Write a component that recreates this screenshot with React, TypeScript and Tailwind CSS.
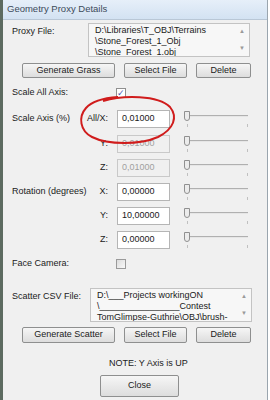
import React from "react";

const font = { fontFamily: "'Liberation Sans', Arial, sans-serif" };

function Btn({ label, className }: { label: string; className: string }) {
  return (
    <div
      className={`flex items-center justify-center rounded-[2px] border border-[#8e8f8f] bg-gradient-to-b from-[#f6f6f6] to-[#dddddd] text-[#1a1a1a] ${className}`}
    >
      {label}
    </div>
  );
}

function Slider() {
  return (
    <div className="relative ml-[14px] h-[18px] w-[66px]">
      <div className="absolute left-[3px] right-[2px] top-[5px] h-[2px] border-t border-[#b0b0b0] bg-[#e6e6e6]" />
      <div className="absolute left-0 top-[1px] h-[10px] w-[6px] rounded-b-[3px] border border-[#909090] bg-[#ececec]" />
      <div className="absolute left-[3px] top-[14px] h-[3px] w-px bg-[#c0c0c0]" />
      <div className="absolute right-[2px] top-[14px] h-[3px] w-px bg-[#c0c0c0]" />
    </div>
  );
}

function AxisRow({
  label,
  axis,
  value,
  disabled,
  mt,
}: {
  label?: string;
  axis: string;
  value: string;
  disabled?: boolean;
  mt: string;
}) {
  return (
    <div className={`flex h-[18px] items-center ${mt}`}>
      <div className="w-[70px] shrink-0 whitespace-nowrap">{label}</div>
      <div className="w-[26px] shrink-0 text-right">{axis}</div>
      <div
        className={`ml-[9px] flex h-[18px] w-[53px] items-center border px-[4px] ${
          disabled
            ? "border-[#c9c9c9] bg-[#f0f0f0] text-[#a0a0a0]"
            : "border-[#b5b5b5] bg-white text-[#1a1a1a]"
        }`}
      >
        {value}
      </div>
      <Slider />
    </div>
  );
}

function FileBox({ lines }: { lines: string[] }) {
  return (
    <div className="flex h-[34px] w-[162px] border border-[#c3c3c3] bg-[#f7f7f7]">
      <div className="flex-1 overflow-hidden whitespace-nowrap pl-[6px] pt-[1px] leading-[11px] text-[#1a1a1a]">
        {lines.map((l) => (
          <div key={l}>{l}</div>
        ))}
      </div>
      <div className="flex w-[14px] flex-col items-center justify-between py-[3px] text-[6px] text-[#9a9a9a]">
        <span>▲</span>
        <span>▼</span>
      </div>
    </div>
  );
}

export default function App() {
  return (
    <div className="h-[400px] w-[270px] overflow-hidden bg-white text-[9px]" style={font}>
      <div className="flex h-[400px] w-[268px] flex-col border-l-[3px] border-r border-l-[#5d6b60] border-r-[#9aa5ae] bg-[#f0f0f0]">
        <div className="flex h-[20px] shrink-0 items-center border-b border-[#b9c7d6] bg-gradient-to-b from-[#e6eff9] to-[#d3e2f2] pl-[4px] text-[9.5px] text-[#3c4a5a]">
          Geometry Proxy Details
        </div>

        <div className="relative flex flex-col pl-[9px] text-[#1a1a1a]">
          <div className="mt-[3px] flex">
            <div className="w-[76px] pt-[2px]">Proxy File:</div>
            <FileBox
              lines={["D:\\Libraries\\T_OBJ\\Terrains", "\\Stone_Forest_1_Obj", "\\Stone_Forest_1.obj"]}
            />
          </div>

          <div className="mt-[6px] flex h-[15px]">
            <Btn label="Generate Grass" className="ml-[10px] w-[93px]" />
            <Btn label="Select File" className="ml-[9px] w-[63px]" />
            <Btn label="Delete" className="ml-[9px] w-[55px]" />
          </div>

          <div className="mt-[9px] flex h-[12px] items-center">
            <div className="w-[104px]">Scale All Axis:</div>
            <div className="flex h-[10px] w-[10px] items-center justify-center border border-[#8f8f8f] bg-white text-[9px] leading-none text-[#4a56b8]">
              ✓
            </div>
          </div>

          <AxisRow label="Scale Axis (%)" axis="All/X:" value="0,01000" mt="mt-[11px]" />
          <AxisRow axis="Y:" value="0,01000" disabled mt="mt-[7px]" />
          <AxisRow axis="Z:" value="0,01000" disabled mt="mt-[6px]" />
          <AxisRow label="Rotation (degrees)" axis="X:" value="0,00000" mt="mt-[6px]" />
          <AxisRow axis="Y:" value="10,00000" mt="mt-[6px]" />
          <AxisRow axis="Z:" value="0,00000" mt="mt-[6px]" />

          <div className="mt-[9px] flex h-[12px] items-center">
            <div className="w-[104px]">Face Camera:</div>
            <div className="h-[10px] w-[10px] border border-[#9a9a9a] bg-gradient-to-br from-[#dcdcdc] to-[#f8f8f8]" />
          </div>

          <div className="mt-[18px] flex">
            <div className="w-[78px] pt-[2px]">Scatter CSV File:</div>
            <FileBox
              lines={["D:\\___Projects workingON", "\\________________Contest", "TomGlimpse-Guthrie\\OBJ\\brush-"]}
            />
          </div>

          <div className="mt-[5px] flex h-[16px]">
            <Btn label="Generate Scatter" className="ml-[10px] w-[93px]" />
            <Btn label="Select File" className="ml-[9px] w-[63px]" />
            <Btn label="Delete" className="ml-[9px] w-[55px]" />
          </div>

          <div className="mt-[14px] pl-[97px]">NOTE: Y Axis is UP</div>

          <div className="mt-[4px] flex">
            <Btn label="Close" className="ml-[88px] h-[22px] w-[79px]" />
          </div>

          <svg
            className="pointer-events-none absolute left-[75px] top-[75px]"
            width="100"
            height="52"
            viewBox="0 0 100 52"
          >
            <path
              d="M25 6 C45 0 80 0 92 12 C100 22 96 34 80 42 C62 50 30 50 14 42 C2 36 0 22 8 13 C14 6 26 3 40 2"
              fill="none"
              stroke="#d01c1c"
              strokeWidth="2"
            />
          </svg>
        </div>
      </div>
    </div>
  );
}
